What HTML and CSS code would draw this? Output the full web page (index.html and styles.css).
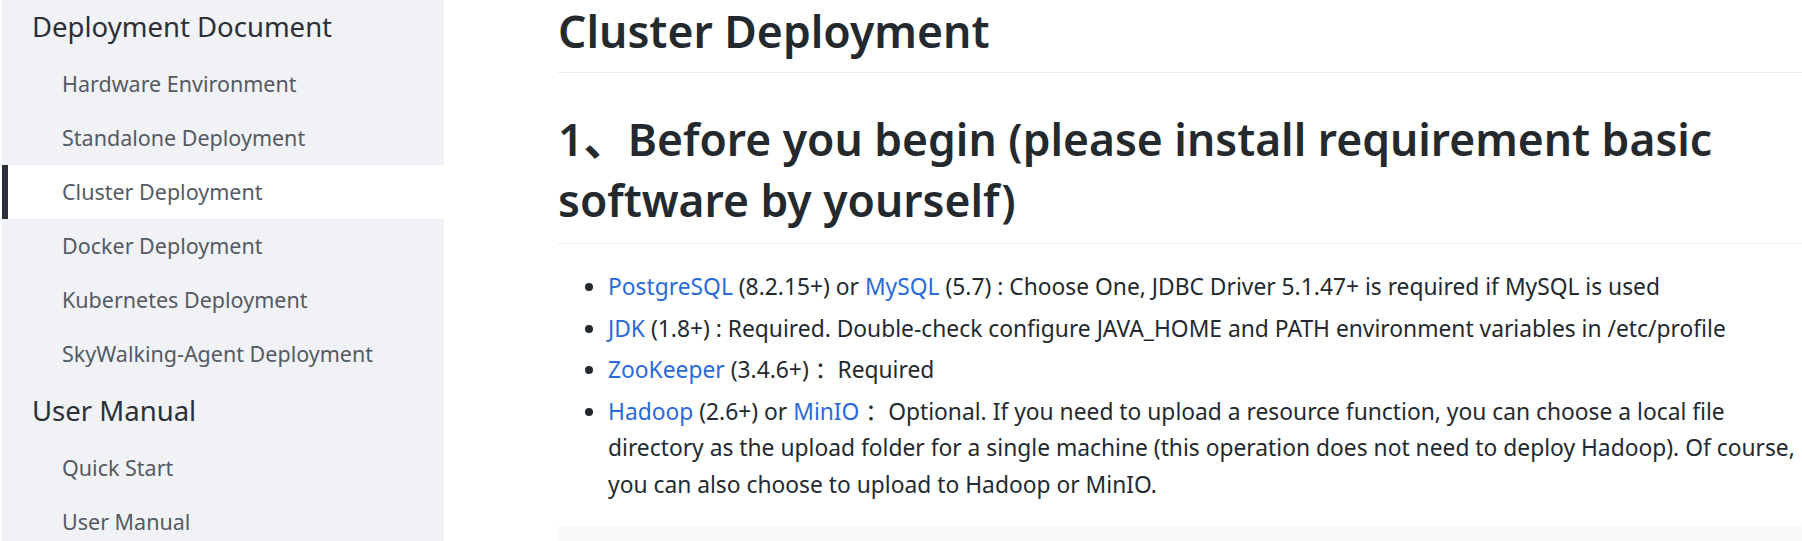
FILE: index.html
```html
<!DOCTYPE html>
<html lang="en">
<head>
<meta charset="utf-8">
<title>Cluster Deployment</title>
<link rel="stylesheet" href="styles.css">
</head>
<body>
<div class="page">
  <nav class="sidebar">
    <div class="nav-inner">
      <div class="nav-group">Deployment Document</div>
      <a class="nav-item">Hardware Environment</a>
      <a class="nav-item">Standalone Deployment</a>
      <a class="nav-item active">Cluster Deployment</a>
      <a class="nav-item">Docker Deployment</a>
      <a class="nav-item">Kubernetes Deployment</a>
      <a class="nav-item">SkyWalking-Agent Deployment</a>
      <div class="nav-group">User Manual</div>
      <a class="nav-item">Quick Start</a>
      <a class="nav-item">User Manual</a>
    </div>
  </nav>
  <main class="content">
    <h1 class="title">Cluster Deployment</h1>
    <h2 class="section">1、Before you begin (please install requirement basic software by yourself)</h2>
    <ul class="reqs">
      <li><a class="link">PostgreSQL</a> (8.2.15+) or <a class="link">MySQL</a> (5.7) : Choose One, JDBC Driver 5.1.47+ is required if MySQL is used</li>
      <li><a class="link">JDK</a> (1.8+) : Required. Double-check configure JAVA_HOME and PATH environment variables in /etc/profile</li>
      <li><a class="link">ZooKeeper</a> (3.4.6+) ：Required</li>
      <li><a class="link">Hadoop</a> (2.6+) or <a class="link">MinIO</a> ：Optional. If you need to upload a resource function, you can choose a local file directory as the upload folder for a single machine (this operation does not need to deploy Hadoop). Of course, you can also choose to upload to Hadoop or MinIO.</li>
    </ul>
    <div class="code-block"></div>
  </main>
</div>
</body>
</html>
```
FILE: styles.css
```css
html, body {
  margin: 0;
  padding: 0;
  background: #ffffff;
  overflow: hidden;
}
body {
  font-family: "Noto Sans", "Noto Sans CJK SC", sans-serif;
  color: #24292e;
}
.page {
  display: flex;
  align-items: flex-start;
  height: 541px;
  overflow: hidden;
}
.sidebar {
  flex: 0 0 442px;
  margin-left: 2px;
  height: 541px;
  background: #f0f2f5;
  overflow: hidden;
}
.nav-inner {
  display: flex;
  flex-direction: column;
  margin-top: -3px;
}
.nav-group {
  height: 60px;
  line-height: 60px;
  padding-left: 30px;
  font-size: 27.5px;
  color: #2c2f36;
  box-sizing: border-box;
  white-space: nowrap;
}
.nav-item {
  display: block;
  height: 54px;
  line-height: 54px;
  padding-left: 60px;
  font-size: 21.5px;
  color: #555a63;
  box-sizing: border-box;
  white-space: nowrap;
}
.nav-item.active {
  background: #ffffff;
  border-left: 6px solid #2b2f3a;
  padding-left: 54px;
}
.content {
  flex: 1;
  padding-left: 114px;
  min-width: 0;
}
.title {
  margin: 0;
  padding: 0 0 10px 0;
  line-height: 62px;
  font-size: 44.5px;
  font-weight: 600;
  border-bottom: 1px solid #eaecef;
}
.section {
  margin: 36px 0 0 0;
  font-size: 44.4px;
  font-weight: 600;
  line-height: 61px;
  padding-bottom: 12px;
  border-bottom: 1px solid #eaecef;
}
.reqs {
  margin: 25px 0 0 0;
  padding-left: 50px;
  font-size: 22.8px;
  line-height: 36.5px;
}
.reqs li {
  margin-bottom: 5px;
}
.link {
  color: #2a6ad8;
  text-decoration: none;
}
.code-block {
  margin-top: 23px;
  height: 60px;
  background: #f6f8fa;
  border-radius: 3px;
}
```
